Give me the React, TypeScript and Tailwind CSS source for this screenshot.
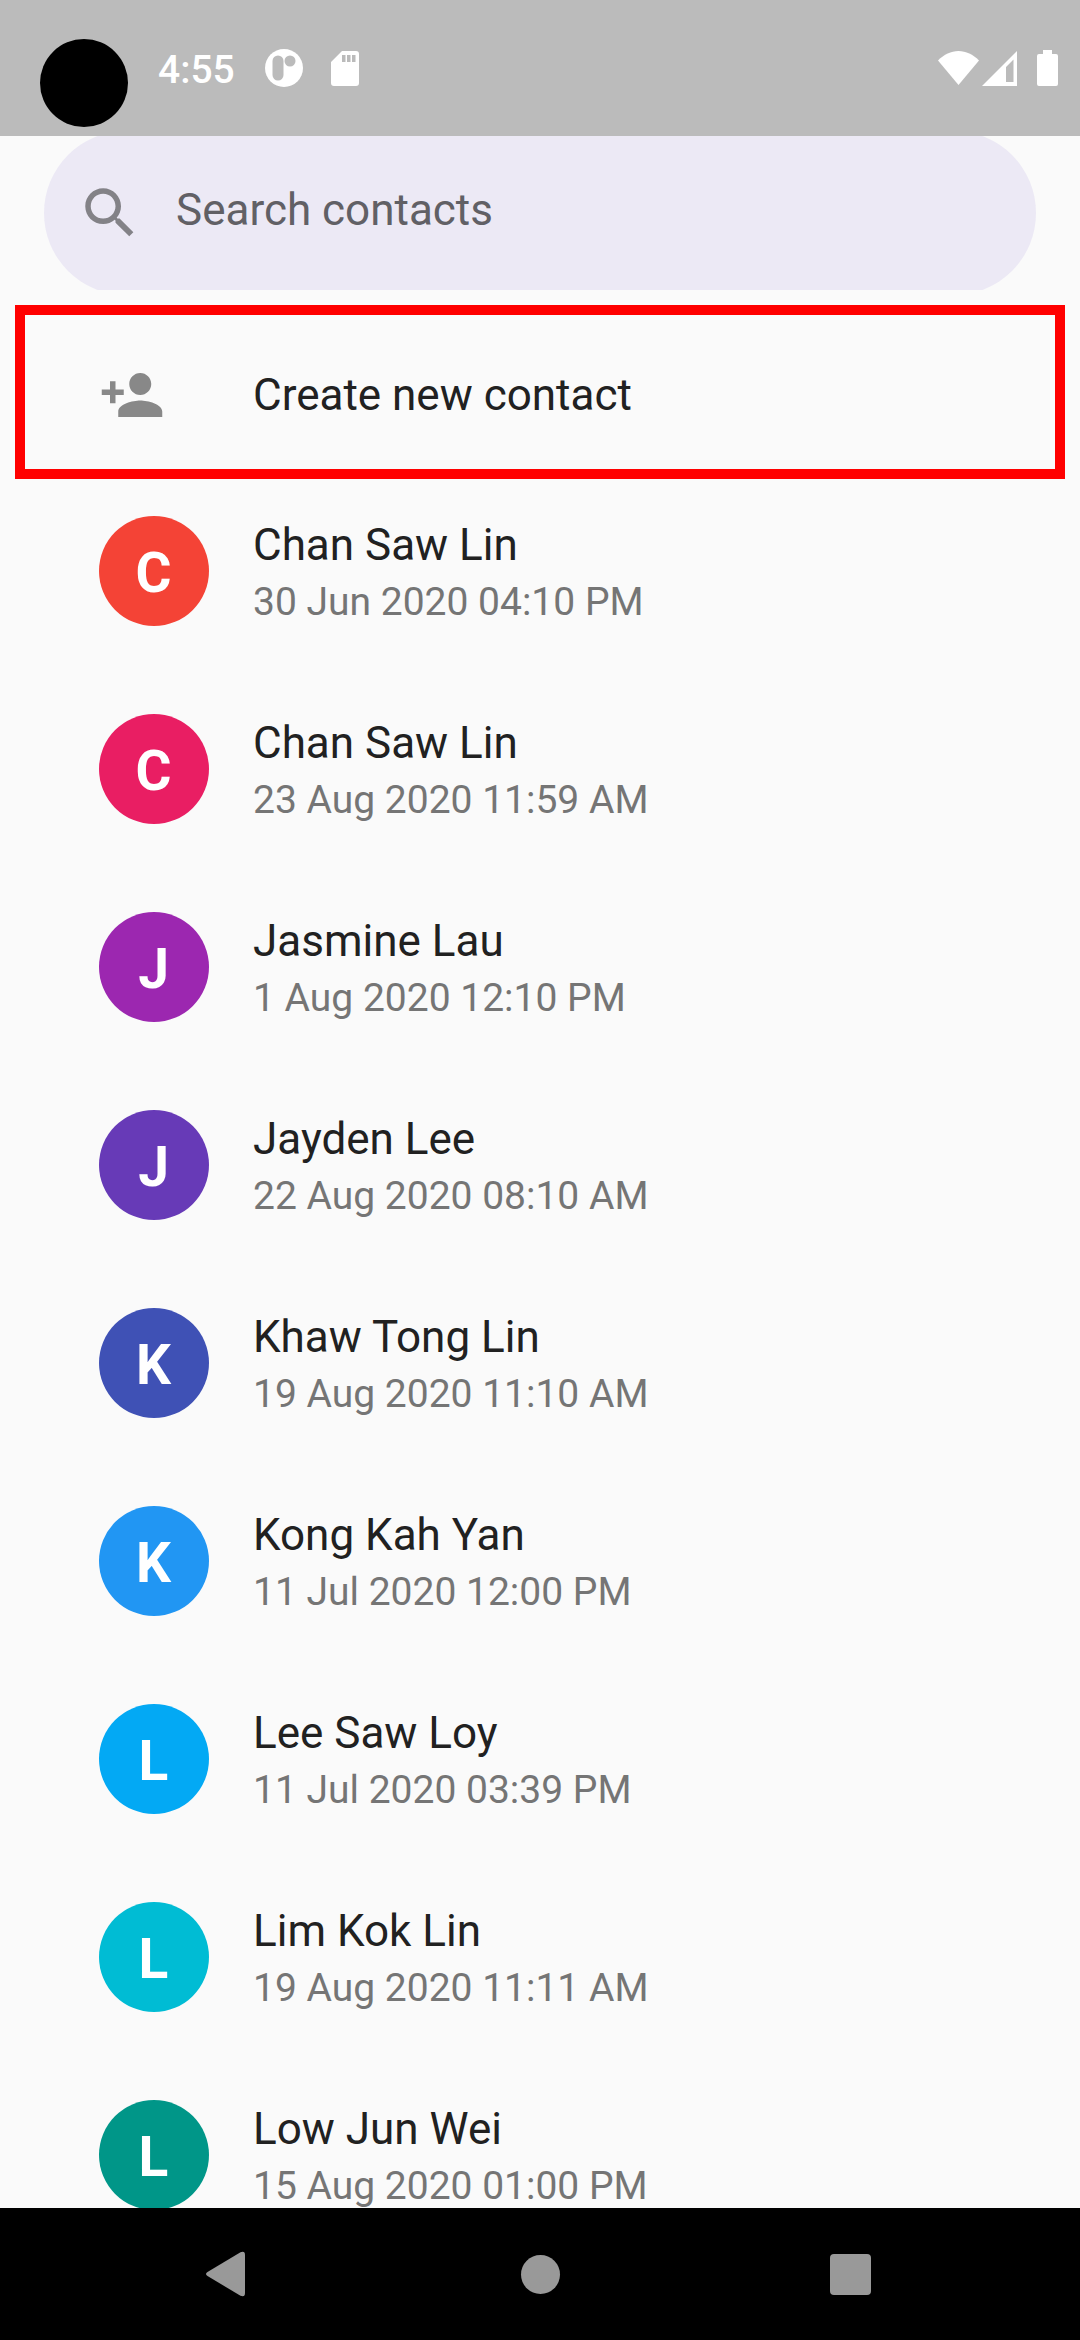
import React from "react";

type Contact = { name: string; date: string; color: string };

const contacts: Contact[] = [
  { name: "Chan Saw Lin", date: "30 Jun 2020 04:10 PM", color: "bg-[#f44336]" },
  { name: "Chan Saw Lin", date: "23 Aug 2020 11:59 AM", color: "bg-[#e91e63]" },
  { name: "Jasmine Lau", date: "1 Aug 2020 12:10 PM", color: "bg-[#9c27b0]" },
  { name: "Jayden Lee", date: "22 Aug 2020 08:10 AM", color: "bg-[#673ab7]" },
  { name: "Khaw Tong Lin", date: "19 Aug 2020 11:10 AM", color: "bg-[#3f51b5]" },
  { name: "Kong Kah Yan", date: "11 Jul 2020 12:00 PM", color: "bg-[#2196f3]" },
  { name: "Lee Saw Loy", date: "11 Jul 2020 03:39 PM", color: "bg-[#03a9f4]" },
  { name: "Lim Kok Lin", date: "19 Aug 2020 11:11 AM", color: "bg-[#00bcd4]" },
  { name: "Low Jun Wei", date: "15 Aug 2020 01:00 PM", color: "bg-[#009688]" },
];

function StatusBar() {
  return (
    <header className="flex h-[136px] shrink-0 items-center bg-[#bbbbbb] pl-10 pr-[22px] text-white">
      <div className="mt-[30px] size-[88px] rounded-full bg-black" />
      <span className="ml-[30px] pt-1 text-[39px] leading-[46px] font-medium">4:55</span>
      <svg className="ml-[30px] size-[38px]" viewBox="0 0 38 38" aria-hidden="true">
        <circle cx="19" cy="19" r="19" fill="#fff" />
        <rect x="7.500" y="6.500" width="11" height="25" rx="5.500" fill="#bbbbbb" />
        <circle cx="25" cy="12" r="5.500" fill="#bbbbbb" />
      </svg>
      <svg className="ml-7 h-[35px] w-7" viewBox="0 0 28 35" aria-hidden="true">
        <path
          fill="#fff"
          fillRule="evenodd"
          d="M25 0H11L0 11v21a3 3 0 0 0 3 3h22a3 3 0 0 0 3-3V3a3 3 0 0 0-3-3zM11 4h3.500v7H11zM16 4h3.500v7H16zM21 4h3.500v7H21z"
        />
      </svg>
      <div className="ml-auto flex items-center">
        <svg className="h-[34px] w-[41px]" viewBox="0 0 41 34" aria-hidden="true">
          <path fill="#fff" d="M20.500 34 0 9.500C6 3.500 13 0 20.500 0S35 3.500 41 9.500z" />
        </svg>
        <svg className="ml-[3px] size-[35px]" viewBox="0 0 35 35" aria-hidden="true">
          <path fill="#fff" fillRule="evenodd" d="M35 0v35H0zM31.500 8.500 24 16v15h7.500z" />
        </svg>
        <svg className="ml-5 h-9 w-[21px]" viewBox="0 0 21 36" aria-hidden="true">
          <path fill="#fff" d="M6 0h9v4h4a2 2 0 0 1 2 2v28a2 2 0 0 1-2 2H2a2 2 0 0 1-2-2V6a2 2 0 0 1 2-2h4z" />
        </svg>
      </div>
    </header>
  );
}

function SearchBar() {
  return (
    <div className="flex h-[154px] shrink-0 items-center overflow-hidden px-11">
      <label className="flex h-[164px] w-full shrink-0 items-center rounded-full bg-[#ece9f5] pl-[33px] pr-10">
        <svg className="size-[66px] shrink-0" viewBox="0 0 24 24" fill="#838287" aria-hidden="true">
          <path d="M15.500 14h-.79l-.28-.27C15.410 12.590 16 11.110 16 9.500 16 5.910 13.090 3 9.500 3S3 5.910 3 9.500 5.910 16 9.500 16c1.610 0 3.090-.59 4.230-1.570l.27.28v.79l5 4.990L20.490 19l-4.990-5zm-6 0C7.010 14 5 11.990 5 9.500S7.010 5 9.500 5 14 7.010 14 9.500 11.990 14 9.500 14z" />
        </svg>
        <input
          type="search"
          aria-label="Search contacts"
          placeholder="Search contacts"
          className="ml-[33px] h-[52px] min-w-0 flex-1 bg-transparent pb-1.5 text-[44px] text-[#212121] outline-none placeholder:text-[#616065]"
        />
      </label>
    </div>
  );
}

function ContactRow({ name, date, color }: Contact) {
  return (
    <li className="h-[198px] shrink-0 pt-[37px]">
      <button type="button" className="flex w-full items-start px-[99px] text-left">
        <span
          className={`flex size-[110px] shrink-0 items-center justify-center rounded-full pt-[3px] pr-px text-[55px] leading-[64px] font-bold text-white ${color}`}
        >
          {name[0]}
        </span>
        <span className="ml-11 flex min-w-0 flex-col">
          <span className="text-[44px] leading-[58px] text-[#212121]">{name}</span>
          <span className="text-[39px] leading-[56px] text-[#757575]">{date}</span>
        </span>
      </button>
    </li>
  );
}

function NavigationBar() {
  return (
    <nav className="flex h-[132px] shrink-0 items-center justify-center bg-black" aria-label="System">
      <button type="button" aria-label="Back" className="flex w-[310px] items-center justify-center">
        <svg className="h-[46px] w-12" viewBox="0 0 48 46" aria-hidden="true">
          <path fill="#999" d="M1.500 21 34.500 1.200Q39 -.5 39 4v38q0 4.500-4.500 2.800L1.500 25q-3-2 0-4z" />
        </svg>
      </button>
      <button type="button" aria-label="Home" className="flex w-[310px] items-center justify-center">
        <span className="size-[39px] rounded-full bg-[#999999]" />
      </button>
      <button type="button" aria-label="Recent apps" className="flex w-[310px] items-center justify-center">
        <span className="size-[41px] rounded-[4px] bg-[#999999]" />
      </button>
    </nav>
  );
}

export default function App() {
  return (
    <div className="flex h-screen flex-col overflow-hidden bg-[#fafafa] font-[Roboto,sans-serif]">
      <StatusBar />
      <main className="flex min-h-0 flex-1 flex-col overflow-hidden">
        <SearchBar />
        <button
          type="button"
          className="mx-[15px] mt-[15px] flex h-[174px] shrink-0 items-center border-[10px] border-[#ff0000] pt-[6px] pl-[74px] text-left"
        >
          <svg className="size-[66px] shrink-0" viewBox="0 0 24 24" fill="#888888" aria-hidden="true">
            <path d="M15 12c2.210 0 4-1.790 4-4s-1.790-4-4-4-4 1.790-4 4 1.790 4 4 4zm-9-2V7H4v3H1v2h3v3h2v-3h3v-2H6zm9 4c-2.670 0-8 1.340-8 4v2h16v-2c0-2.660-5.330-4-8-4z" />
          </svg>
          <span className="ml-[88px] text-[44px] leading-[52px] text-[#212121]">Create new contact</span>
        </button>
        <ul className="flex min-h-0 flex-1 flex-col overflow-hidden">
          {contacts.map((contact) => (
            <ContactRow key={contact.date} {...contact} />
          ))}
        </ul>
      </main>
      <NavigationBar />
    </div>
  );
}
